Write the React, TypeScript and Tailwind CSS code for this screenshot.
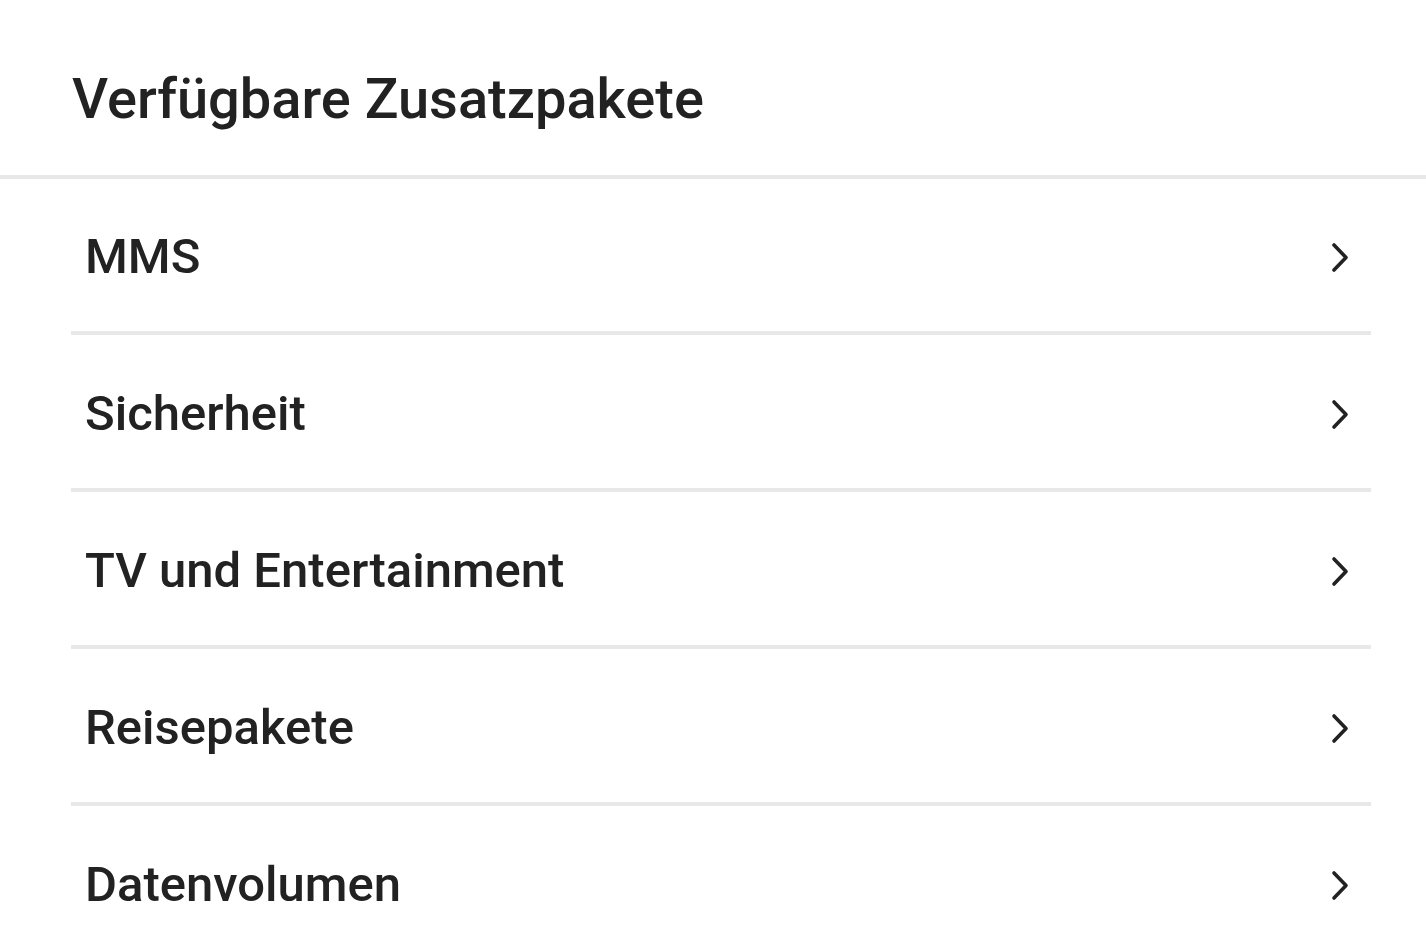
const packages = [
  "MMS",
  "Sicherheit",
  "TV und Entertainment",
  "Reisepakete",
  "Datenvolumen",
];

function Chevron() {
  return (
    <svg
      className="mt-[3px]"
      width="20"
      height="32"
      viewBox="0 0 20 32"
      fill="none"
      stroke="#222222"
      strokeWidth="3.6"
      strokeLinecap="round"
      strokeLinejoin="round"
      aria-hidden
    >
      <path d="M4 3 L16 15.5 L4 28" />
    </svg>
  );
}

function PackageRow({ label }: { label: string }) {
  return (
    <div className="ml-[71px] mr-[55px] flex h-[157px] items-center justify-between border-b-4 border-[#e8e8e8] pl-[14px] pr-[21px] pt-[4px]">
      <span className="text-[49px] font-medium text-[#222222]">{label}</span>
      <Chevron />
    </div>
  );
}

export default function App() {
  return (
    <div
      className="min-h-screen w-full overflow-hidden bg-white"
      style={{ fontFamily: "Roboto, 'Noto Sans', sans-serif" }}
    >
      <header className="flex h-[179px] items-center border-b-4 border-[#e8e8e8] pl-[72px] pt-[22px]">
        <h1 className="text-[56px] font-medium text-[#222222]">
          Verfügbare Zusatzpakete
        </h1>
      </header>
      <div className="-mt-[1px]">
        {packages.map((p) => (
          <PackageRow key={p} label={p} />
        ))}
      </div>
    </div>
  );
}
